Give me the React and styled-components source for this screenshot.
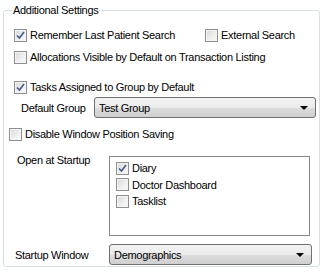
import React from "react";
import styled, { createGlobalStyle } from "styled-components";

const GlobalStyle = createGlobalStyle`
  html, body {
    margin: 0;
    padding: 0;
    background: #ffffff;
  }
  body {
    font-family: "Liberation Sans", Arial, sans-serif;
    font-size: 11px;
    letter-spacing: -0.3px;
    color: #000;
  }
`;

const CheckMark = () => (
  <svg width="9" height="9" viewBox="0 0 9 9">
    <path d="M1 4.5 L3.5 7 L8 1" fill="none" stroke="#4a5d92" strokeWidth="1.7" />
  </svg>
);

const Check = ({ checked, label, offset }) => (
  <CheckLabel $offset={offset}>
    <Box>{checked && <CheckMark />}</Box>
    <span>{label}</span>
  </CheckLabel>
);

const Combo = ({ value, right }) => (
  <ComboBox $right={right}>
    <span>{value}</span>
    <Arrow />
  </ComboBox>
);

export default function App() {
  return (
    <Page>
      <GlobalStyle />
      <Group>
        <Legend>Additional Settings</Legend>
        <Row $top={10}>
          <Check checked label="Remember Last Patient Search" offset={10} />
          <Spacer $w={30} />
          <Check label="External Search" />
        </Row>
        <Row $top={6}>
          <Check label="Allocations Visible by Default on Transaction Listing" offset={10} />
        </Row>
        <Row $top={14}>
          <Check checked label="Tasks Assigned to Group by Default" offset={10} />
        </Row>
        <FieldRow $top={2}>
          <FieldLabel $w={73} $pad={17}>Default Group</FieldLabel>
          <Combo value="Test Group" right={3} />
        </FieldRow>
        <Row $top={8}>
          <Check label="Disable Window Position Saving" offset={5} />
        </Row>
        <StartupBlock>
          <TopLabel>Open at Startup</TopLabel>
          <ListBox>
            <ListItem><Check checked label="Diary" /></ListItem>
            <ListItem><Check label="Doctor Dashboard" /></ListItem>
            <ListItem><Check label="Tasklist" /></ListItem>
          </ListBox>
        </StartupBlock>
        <FieldRow $top={8}>
          <FieldLabel $w={94} $pad={11}>Startup Window</FieldLabel>
          <Combo value="Demographics" right={7} />
        </FieldRow>
      </Group>
    </Page>
  );
}

const Page = styled.div`
  width: 327px;
  height: 273px;
  padding: 4px 0 0 3px;
  box-sizing: border-box;
`;

const Group = styled.fieldset`
  margin: 0;
  padding: 0 0 6px 0;
  width: 317px;
  height: 263px;
  box-sizing: border-box;
  border: 1px solid #d5dfe5;
  border-radius: 3px;
`;

const Legend = styled.legend`
  margin-left: 8px;
  padding: 0 1px;
  line-height: 13px;
  font-size: 11px;
`;

const Row = styled.div`
  display: flex;
  align-items: center;
  height: 16px;
  margin-top: ${(p) => p.$top}px;
`;

const Spacer = styled.div`
  width: ${(p) => p.$w}px;
  flex: none;
`;

const CheckLabel = styled.label`
  display: flex;
  align-items: center;
  gap: 3px;
  margin-left: ${(p) => p.$offset || 0}px;
  white-space: nowrap;
`;

const Box = styled.span`
  width: 13px;
  height: 13px;
  box-sizing: border-box;
  border: 1px solid #8e8f8f;
  background: linear-gradient(135deg, #d8d8d8 0%, #f0f0f0 60%, #fbfbfb 100%);
  box-shadow: inset 0 0 0 1px #f4f4f4;
  display: flex;
  align-items: center;
  justify-content: center;
  flex: none;
`;

const FieldRow = styled.div`
  display: flex;
  align-items: center;
  height: 21px;
  margin-top: ${(p) => p.$top}px;
`;

const FieldLabel = styled.div`
  width: ${(p) => p.$w}px;
  padding-left: ${(p) => p.$pad}px;
  flex: none;
`;

const ComboBox = styled.div`
  flex: 1;
  height: 21px;
  box-sizing: border-box;
  margin-right: ${(p) => p.$right}px;
  border: 1px solid #707070;
  border-radius: 3px;
  background: linear-gradient(#f2f2f2 0%, #ebebeb 50%, #dddddd 51%, #cfcfcf 100%);
  display: flex;
  align-items: center;
  justify-content: space-between;
  padding: 0 7px 0 4px;
`;

const Arrow = styled.span`
  width: 0;
  height: 0;
  border-left: 4px solid transparent;
  border-right: 4px solid transparent;
  border-top: 4px solid #000;
`;

const StartupBlock = styled.div`
  display: flex;
  align-items: flex-start;
  margin-top: 14px;
`;

const TopLabel = styled.div`
  width: 92px;
  padding-left: 13px;
  margin-top: -2px;
  flex: none;
`;

const ListBox = styled.div`
  width: 201px;
  height: 80px;
  box-sizing: border-box;
  border: 1px solid #828790;
  background: #fff;
  padding: 3px 0 0 6px;
`;

const ListItem = styled.div`
  height: 16.5px;
  display: flex;
  align-items: center;
`;
